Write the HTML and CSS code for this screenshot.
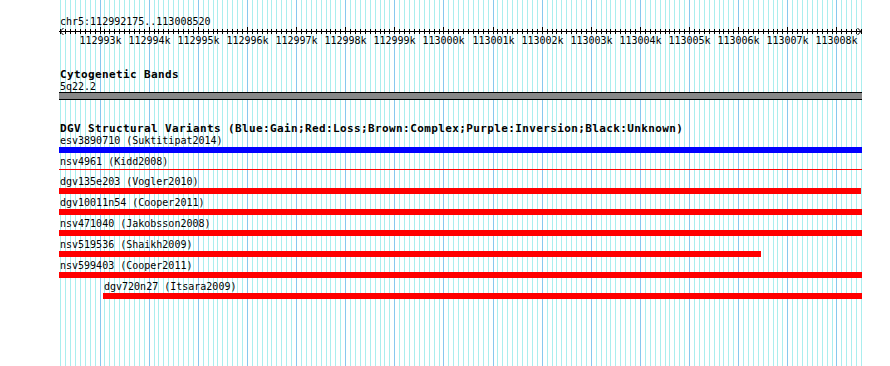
FILE: index.html
```html
<!DOCTYPE html>
<html lang="en">
<head>
    <meta charset="UTF-8">
    <title>chr5:112992175..113008520 - DGV Structural Variants</title>
    <link rel="stylesheet" href="styles.css">
</head>
<body>

    <div class="browser">
        <div class="side"></div>

        <div class="tracks">
            <svg class="guides" id="guides" width="803" height="366"></svg>

            <div class="position">chr5:112992175..113008520</div>
            <svg class="ruler" id="ruler" width="803" height="20"></svg>

            <section class="track cyto">
                <h2 class="track-title">Cytogenetic Bands</h2>
                <div class="label">5q22.2</div>
                <div class="band"></div>
            </section>

            <section class="track dgv">
                <h2 class="track-title">DGV Structural Variants (Blue:Gain;Red:Loss;Brown:Complex;Purple:Inversion;Black:Unknown)</h2>
                <div id="variants"></div>
            </section>
        </div>
    </div>

    <script>
        const CHROM_START = 112992175;
        const CHROM_END = 113008520;
        const WIDTH = 803;
        const SVG_NS = 'http://www.w3.org/2000/svg';

        const variants = [
            { name: 'esv3890710', study: 'Suktitipat2014', type: 'gain', start: 112980000, end: 113020000 },
            { name: 'nsv4961', study: 'Kidd2008', type: 'loss', start: 112975000, end: 113030000, thin: true },
            { name: 'dgv135e203', study: 'Vogler2010', type: 'loss', start: 112985000, end: 113008500 },
            { name: 'dgv10011n54', study: 'Cooper2011', type: 'loss', start: 112982000, end: 113015000 },
            { name: 'nsv471040', study: 'Jakobsson2008', type: 'loss', start: 112970000, end: 113025000 },
            { name: 'nsv519536', study: 'Shaikh2009', type: 'loss', start: 112988000, end: 113006465 },
            { name: 'nsv599403', study: 'Cooper2011', type: 'loss', start: 112982000, end: 113015000 },
            { name: 'dgv720n27', study: 'Itsara2009', type: 'loss', start: 112993071, end: 113012000 }
        ];

        function toX(bp) {
            const x = Math.round((bp - CHROM_START) * WIDTH / (CHROM_END - CHROM_START));
            return Math.max(0, Math.min(WIDTH, x));
        }

        function rect(parent, x, y, w, h, cls) {
            const r = document.createElementNS(SVG_NS, 'rect');
            r.setAttribute('x', x);
            r.setAttribute('y', y);
            r.setAttribute('width', w);
            r.setAttribute('height', h);
            r.setAttribute('class', cls);
            parent.appendChild(r);
        }

        // blue guidelines every 100bp, darker every 1kb
        const guides = document.getElementById('guides');
        const ruler = document.getElementById('ruler');
        const firstTick = Math.ceil(CHROM_START / 100) * 100;

        for (let bp = firstTick; bp <= CHROM_END; bp += 100) {
            const x = toX(bp);
            const major = bp % 1000 === 0;
            rect(guides, x, 0, 1, 366, major ? 'guide major' : 'guide');
            rect(ruler, x, major ? 1 : 3, 1, major ? 7 : 5, 'tick');

            if (major) {
                const label = document.createElementNS(SVG_NS, 'text');
                label.setAttribute('x', x + 0.5);
                label.setAttribute('y', 18);
                label.setAttribute('class', 'tick-label');
                label.textContent = (bp / 1000) + 'k';
                ruler.appendChild(label);
            }
        }

        rect(ruler, 0, 5, WIDTH, 1, 'tick');
        const arrows = document.createElementNS(SVG_NS, 'path');
        arrows.setAttribute('d', 'M4.5 2 L1 5.5 L4.5 9 M' + (WIDTH - 4.5) + ' 2 L' + (WIDTH - 1) + ' 5.5 L' + (WIDTH - 4.5) + ' 9');
        arrows.setAttribute('class', 'arrow');
        ruler.appendChild(arrows);

        // one row per variant: label above its bar
        const list = document.getElementById('variants');
        variants.forEach(v => {
            const left = toX(v.start);
            const right = toX(v.end);

            const row = document.createElement('div');
            row.className = 'variant';
            row.style.paddingLeft = left + 'px';

            const label = document.createElement('div');
            label.className = 'label';
            label.textContent = `${v.name} (${v.study})`;

            const bar = document.createElement('div');
            bar.className = 'bar ' + v.type + (v.thin ? ' thin' : '');
            bar.style.width = (right - left) + 'px';

            row.appendChild(label);
            row.appendChild(bar);
            list.appendChild(row);
        });
    </script>

</body>
</html>
```

FILE: styles.css
```css
* {
    box-sizing: border-box;
    margin: 0;
    padding: 0;
}

body {
    background-color: #ffffff;
    color: #000000;
    font-family: "DejaVu Sans Mono", "Liberation Mono", monospace;
    font-size: 10px;
}

.browser {
    display: flex;
    width: 890px;
    height: 366px;
    overflow: hidden;
}

.side {
    width: 59px;
    flex: none;
}

.tracks {
    position: relative;
    width: 803px;
    flex: none;
}

.guides {
    position: absolute;
    left: 0;
    top: 0;
}

.guide {
    fill: #aaeeee;
}

.guide.major {
    fill: #88c8ee;
}

.position,
.ruler,
.track {
    position: relative;
}

.position {
    line-height: 11px;
    margin-top: 16px;
    padding-left: 1px;
}

.ruler {
    display: block;
    margin-top: -1px;
}

.tick {
    fill: #000000;
}

.arrow {
    fill: none;
    stroke: #000000;
    stroke-width: 1;
}

.tick-label {
    font-family: "DejaVu Sans Mono", "Liberation Mono", monospace;
    font-size: 10px;
    text-anchor: middle;
    fill: #000000;
}

.track {
    margin-top: 22px;
}

.track-title {
    font-size: 11px;
    font-weight: bold;
    line-height: 11px;
    padding-top: 1px;
    letter-spacing: 0.38px;
    padding-left: 1px;
    white-space: nowrap;
}

.label {
    line-height: 11px;
    padding-top: 1px;
    padding-left: 1px;
    white-space: nowrap;
}

.band {
    height: 8px;
    background-color: #888888;
    border-top: 1px solid #000000;
    border-bottom: 1px solid #000000;
}

.variant .label {
    margin-bottom: 1px;
}

.bar {
    height: 6px;
    margin-bottom: 2px;
}

.bar.thin {
    height: 1px;
    margin-top: 2px;
    margin-bottom: 5px;
}

.bar.gain {
    background-color: #0000ff;
}

.bar.loss {
    background-color: #ff0000;
}
```
